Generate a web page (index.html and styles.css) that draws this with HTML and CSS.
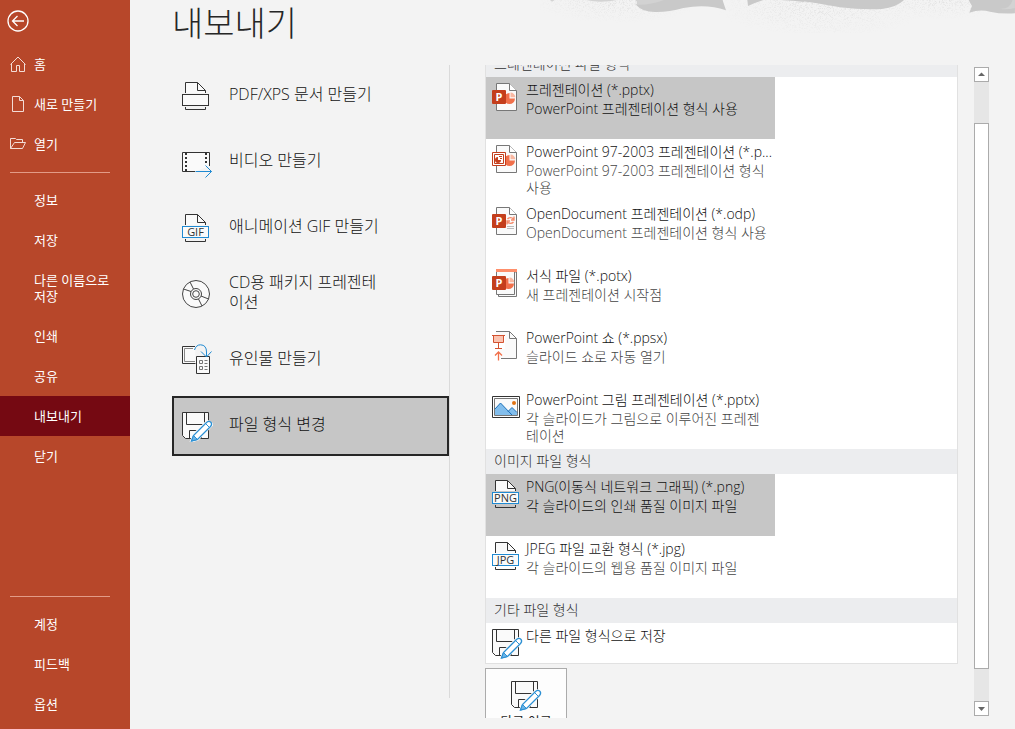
FILE: index.html
```html
<!DOCTYPE html>
<html lang="ko">
<head>
<meta charset="utf-8">
<meta name="viewport" content="width=device-width, initial-scale=1">
<title>내보내기</title>
<link rel="stylesheet" href="styles.css">
</head>
<body>
<svg class="defs" aria-hidden="true">
  <symbol id="save" viewBox="0 0 32 32">
    <path d="M1.500 2.500H27.500V28.500H4.500L1.500 25.500Z" fill="#fafafa" stroke="#333"/>
    <path d="M5.500 2.500V14.500H23.500V2.500M8.500 28.500V20.500H20.500V28.500M12.500 28V25" fill="none" stroke="#333"/>
    <path d="M10.500 31L13 24.500L26.500 11.500L31 14.500L17 29Z" class="halo"/>
    <path d="M10.500 31L12.500 25.500L25.500 12.500Q28 10.500 29.800 12.200Q31.500 14 29.500 16.500L16.500 29.500Z" fill="#fff" stroke="#2b90d4" stroke-width="1.300"/>
    <path d="M10.500 31L12.500 25.500L16.500 29.500Z" fill="#6bb5e8" stroke="#2b90d4"/>
    <path d="M24.500 13.500L28.500 17.500" stroke="#2b90d4"/>
  </symbol>
  <symbol id="tagged" viewBox="0 0 32 32">
    <path d="M4.500 13V2.500H16.500L24.500 10.500V13" fill="#fafafa" stroke="#333"/>
    <path d="M16.500 2.500V10.500H24.500" fill="none" stroke="#333"/>
    <path d="M4.500 27V29.500H24.500V27" fill="none" stroke="#333"/>
    <rect x="1.500" y="14.500" width="26" height="11" fill="#fafafa" stroke="#1f8ad2"/>
  </symbol>
  <symbol id="page" viewBox="0 0 32 32">
    <path d="M5.500 2.500H18.500L25.500 9.500V29.500H5.500Z" fill="#fafafa" stroke="#777"/>
    <path d="M18.500 2.500V9.500H25.500" fill="#fff" stroke="#777"/>
  </symbol>
  <symbol id="pie" viewBox="0 0 32 32">
    <path d="M18.500 12V17.500H24A5.500 5.500 0 1 1 18.500 12Z" fill="#f1704b"/>
    <path d="M19.500 11.500A4.800 4.800 0 0 1 24.300 16.300H19.500Z" fill="#f9b8a2"/>
  </symbol>
  <symbol id="pbadge" viewBox="0 0 32 32">
    <rect x="1" y="9" width="14" height="14" rx="1" fill="#c43e1c"/>
    <text x="8" y="20" class="p-mark">P</text>
  </symbol>
</svg>

<nav class="sidebar">
  <button class="back" aria-label="뒤로"><svg viewBox="0 0 22 22"><circle cx="11" cy="11" r="10"/><path d="M5.500 11H17M10.500 6L5.500 11L10.500 16"/></svg></button>
  <a class="nav" href="#"><svg viewBox="0 0 16 16"><path d="M.500 8.500L8 1L15.500 8.500M1.500 8V15.500H6.500V9.500H9.500V15.500H14.500V8"/></svg><span>홈</span></a>
  <a class="nav" href="#"><svg viewBox="0 0 16 16"><path d="M2.500 .500H9.500L13.500 4.500V15.500H2.500ZM9.500 .500V4.500H13.500"/></svg><span>새로 만들기</span></a>
  <a class="nav" href="#"><svg viewBox="0 0 16 16"><path d="M.500 12.500V2.500H5.500L6.500 3.500H12.500V6M.500 12.500L4.500 6.500H15.500L12.500 12.500Z"/></svg><span>열기</span></a>
  <hr>
  <a class="nav" href="#"><span>정보</span></a>
  <a class="nav" href="#"><span>저장</span></a>
  <a class="nav" href="#"><span>다른 이름으로 저장</span></a>
  <a class="nav" href="#"><span>인쇄</span></a>
  <a class="nav" href="#"><span>공유</span></a>
  <a class="nav current" href="#" aria-current="page"><span>내보내기</span></a>
  <a class="nav" href="#"><span>닫기</span></a>
  <hr class="push">
  <a class="nav" href="#"><span>계정</span></a>
  <a class="nav" href="#"><span>피드백</span></a>
  <a class="nav" href="#"><span>옵션</span></a>
</nav>

<main class="main">
  <svg class="clouds" viewBox="0 0 1425 100" aria-hidden="true">
    <defs>
      <filter id="grain" x="0" y="0" width="100%" height="100%">
        <feTurbulence type="fractalNoise" baseFrequency=".8" numOctaves="2" seed="4"/>
        <feColorMatrix values="0 0 0 0 .72  0 0 0 0 .72  0 0 0 0 .72  4 0 0 0 -1.900"/>
        <feComposite in2="SourceGraphic" operator="in"/>
      </filter>
      <radialGradient id="sand"><stop offset="0" stop-color="#000" stop-opacity=".8"/><stop offset="1" stop-color="#000" stop-opacity="0"/></radialGradient>
    </defs>
    <g filter="url(#grain)">
      <ellipse cx="850" cy="10" rx="330" ry="105" fill="url(#sand)"/>
      <ellipse cx="230" cy="0" rx="260" ry="70" fill="url(#sand)"/>
      <ellipse cx="1220" cy="0" rx="200" ry="60" fill="url(#sand)"/>
    </g>
    <path d="M30 0L36 5L44 0ZM138 0Q180 10 232 0Z" fill="#d4d4d4"/>
    <path d="M286 0Q298 10 288 14Q305 35 345 36Q385 37 430 24Q500 10 558 31Q550 8 548 0Z" fill="#c9c9c9"/>
    <path d="M286 0Q298 10 288 14Q330 16 372 0Z" fill="#d2d2d2"/>
    <path d="M622 0L624 18Q645 8 670 0ZM760 0Q830 8 900 22Q965 30 1025 27Q1070 22 1092 0Z" fill="#c9c9c9"/>
    <path d="M670 0H780L800 6Q730 -2 670 0Z" fill="#c9c9c9"/>
    <path d="M1286 0L1296 18L1288 38Q1320 27 1350 35Q1385 43 1425 40V0Z" fill="#c9c9c9"/>
    <path d="M1380 26Q1410 28 1418 0H1425V24Q1400 30 1380 26Z" fill="#d3d3d3"/>
  </svg>
  <h1>내보내기</h1>
  <div class="content">
    <div class="options">
      <button class="option">
        <svg class="icon" viewBox="0 0 32 32" fill="none" stroke="#333"><path d="M4.500 13V2.500H16.500L24.500 10.500V13" fill="#fafafa"/><path d="M16.500 2.500V10.500H24.500M4.500 27V29.500H24.500V27"/><rect x="1.500" y="14.500" width="26" height="11" fill="#fafafa"/></svg>
        <span>PDF/XPS 문서 만들기</span></button>
      <button class="option">
        <svg class="icon" viewBox="0 0 32 32" fill="none" stroke="#333"><path d="M14 25.500H1.500V6.500H28.500V20" fill="#fafafa"/><path d="M5 7V25M25 7V19" stroke-width="2" stroke-dasharray="2 2"/><path d="M14.500 25.500H30.500M24.500 19.500L30.500 25.500L24.500 31.500" stroke="#1f8ad2"/></svg>
        <span>비디오 만들기</span></button>
      <button class="option">
        <svg class="icon" viewBox="0 0 32 32"><use href="#tagged"/><text x="14.500" y="24" class="tag">GIF</text></svg>
        <span>애니메이션 GIF 만들기</span></button>
      <button class="option">
        <svg class="icon" viewBox="0 0 32 32" fill="none" stroke="#444"><circle cx="15" cy="16" r="13.500" fill="#fafafa"/><circle cx="15" cy="16" r="5.500"/><circle cx="15" cy="16" r="3.300"/><path d="M2.500 11L10 13.500M9 4L12.500 11M20 18L27.500 21M17.500 21L21 28"/></svg>
        <span>CD용 패키지 프레젠테이션</span></button>
      <button class="option">
        <svg class="icon" viewBox="0 0 32 32" fill="none" stroke="#333"><path d="M14.500 19.500H1.500V2.500H14" fill="#fafafa"/><path d="M14 17.500H3.500V4.500H12" stroke="#888"/><path d="M15.500 12.500H28.500V29.500H15.500Z" fill="#fafafa"/><path d="M18.500 16.500H21.500V19.500H18.500ZM18.500 22.500H21.500V25.500H18.500ZM23.500 16.500H26.500M23.500 19.500H26.500M23.500 22.500H26.500M23.500 25.500H26.500" stroke="#777"/><path d="M13.500 6Q15 .800 19.500 .800Q25.500 1 25.500 8V12.500M20 7.500L25.500 13L30.500 7.500" stroke="#1f8ad2"/></svg>
        <span>유인물 만들기</span></button>
      <button class="option selected">
        <svg class="icon" viewBox="0 0 32 32"><use href="#save"/></svg>
        <span>파일 형식 변경</span></button>
    </div>

    <div class="viewport">
      <div class="types">
        <h2>프레젠테이션 파일 형식</h2>
        <button class="type selected"><svg class="icon" viewBox="0 0 32 32"><use href="#page"/><use href="#pie"/><use href="#pbadge"/></svg>
          <span class="text"><b>프레젠테이션 (*.pptx)</b><span>PowerPoint 프레젠테이션 형식 사용</span></span></button>
        <button class="type"><svg class="icon" viewBox="0 0 32 32"><use href="#page"/><use href="#pie"/><path d="M1.500 9.500H14.500V22.500H1.500Z" fill="#fff" stroke="#c43e1c"/><path d="M3.500 11.500H12.500V20.500H3.500Z" fill="#fff" stroke="#c43e1c"/><path d="M7 14V17H10A3 3 0 1 1 7 14ZM8 13H11V14H8ZM9 15H11V16H9Z" fill="#c43e1c"/></svg>
          <span class="text"><b>PowerPoint 97-2003 프레젠테이션 (*.p...</b><span>PowerPoint 97-2003 프레젠테이션 형식 사용</span></span></button>
        <button class="type"><svg class="icon" viewBox="0 0 32 32"><use href="#page"/><path d="M16.500 14A4 4 0 0 1 22.500 14M22.500 17A4 4 0 0 1 16.500 17M23 11.500V15H20M16 19.500V16H19" fill="none" stroke="#f58b6b" stroke-width="1.400"/><path d="M16 21.500H23M16 23.500H23" stroke="#bbb"/><use href="#pbadge"/></svg>
          <span class="text"><b>OpenDocument 프레젠테이션 (*.odp)</b><span>OpenDocument 프레젠테이션 형식 사용</span></span></button>
        <button class="type"><svg class="icon" viewBox="0 0 32 32"><path d="M7.500 5V29.500H25.500V5Z" fill="#fafafa" stroke="#777"/><path d="M5.500 4V27.500H23.500V4Z" fill="#fafafa" stroke="#777"/><path d="M5 2H26V5H5Z" fill="#ff8f6b"/><g transform="translate(-1 -1)"><use href="#pie" width="32" height="32"/></g><use href="#pbadge"/></svg>
          <span class="text"><b>서식 파일 (*.potx)</b><span>새 프레젠테이션 시작점</span></span></button>
        <button class="type"><svg class="icon" viewBox="0 0 32 32"><path d="M5 2.500H18.500L25.500 9.500V29.500H9V20H14V6H5Z" fill="#fafafa"/><path d="M5 2.500H18.500L25.500 9.500V29.500H10M18.500 2.500V9.500H25.500" fill="none" stroke="#777"/><path d="M2.500 6.500H12.500V13.500H2.500Z" fill="#fbc4b2" stroke="#d35230"/><path d="M1 6.500H14M7.500 14V19.500M4 19.500H11" stroke="#d35230"/><path d="M7.500 31.500V23M4 26.500L7.500 23L11 26.500" fill="none" stroke="#f1704b" stroke-width="1.300"/></svg>
          <span class="text"><b>PowerPoint 쇼 (*.ppsx)</b><span>슬라이드 쇼로 자동 열기</span></span></button>
        <button class="type"><svg class="icon" viewBox="0 0 32 32"><path d="M1.500 5.500H28.500V26.500H1.500Z" fill="#fff" stroke="#333"/><path d="M3.500 7.500H26.500V24.500H3.500Z" fill="#fafafa" stroke="#777"/><path d="M4 18L9.500 12L21 24H4Z" fill="#83beec"/><path d="M17 20.500L21 16.500L26 21.500V24H20.500Z" fill="#83beec"/><path d="M4 18L9.500 12L21 24M17 20.500L21 16.500L26 21.500" fill="none" stroke="#1b6fb8"/><circle cx="23" cy="12" r="2" fill="#e07214"/></svg>
          <span class="text"><b>PowerPoint 그림 프레젠테이션 (*.pptx)</b><span>각 슬라이드가 그림으로 이루어진 프레젠테이션</span></span></button>
        <h2>이미지 파일 형식</h2>
        <button class="type selected"><svg class="icon" viewBox="0 0 32 32"><use href="#tagged"/><text x="14.500" y="24" class="tag">PNG</text></svg>
          <span class="text"><b>PNG(이동식 네트워크 그래픽) (*.png)</b><span>각 슬라이드의 인쇄 품질 이미지 파일</span></span></button>
        <button class="type"><svg class="icon" viewBox="0 0 32 32"><use href="#tagged"/><text x="14.500" y="24" class="tag">JPG</text></svg>
          <span class="text"><b>JPEG 파일 교환 형식 (*.jpg)</b><span>각 슬라이드의 웹용 품질 이미지 파일</span></span></button>
        <h2>기타 파일 형식</h2>
        <button class="type short"><svg class="icon" viewBox="0 0 32 32"><use href="#save"/></svg>
          <span class="text"><b>다른 파일 형식으로 저장</b></span></button>
      </div>
      <button class="save-as"><svg class="icon" viewBox="0 0 32 32"><use href="#save"/></svg><span>다른 이름으로 저장</span></button>
    </div>

    <div class="scrollbar">
      <button aria-label="위로"><svg viewBox="0 0 13 13"><path d="M3 8L6.500 4.500L10 8Z"/></svg></button>
      <div class="track"><div class="thumb"></div></div>
      <button aria-label="아래로"><svg viewBox="0 0 13 13"><path d="M3 5H10L6.500 9Z"/></svg></button>
    </div>
  </div>
</main>
</body>
</html>
```
FILE: styles.css
```css
* { box-sizing: border-box; }

body {
  margin: 0;
  display: flex;
  height: 100vh;
  min-height: 640px;
  background: #f3f3f3;
  color: #262626;
  font-family: "Open Sans", "Noto Sans CJK KR", sans-serif;
  font-size: 14px;
}

button {
  margin: 0;
  padding: 0;
  border: 0;
  background: none;
  color: inherit;
  font: inherit;
  text-align: left;
}

h1, h2 { margin: 0; font-weight: 400; }

.defs { position: absolute; width: 0; height: 0; }
.icon { flex: none; width: 32px; height: 32px; overflow: visible; }
.halo { fill: none; stroke: #fafafa; stroke-width: 3px; }
.selected .halo { stroke: #c6c6c6; }
.tag { fill: #333; font-size: 11px; font-weight: 400; text-anchor: middle; stroke: none; }
.p-mark { fill: #fff; font-size: 11px; font-weight: 700; text-anchor: middle; }

/* Sidebar */
.sidebar {
  flex: none;
  display: flex;
  flex-direction: column;
  width: 130px;
  padding: 10px 0 5px;
  background: #b7472a;
  color: #fff;
  font-size: 13px;
  line-height: 16px;
}

.sidebar svg { fill: none; stroke: #f3dcd6; }
.back { margin: 0 0 12px 7px; width: 22px; height: 22px; }
.back svg { display: block; width: 22px; height: 22px; }
.sidebar .back svg { stroke: #fff; stroke-width: 1.3px; }

.nav {
  display: flex;
  gap: 8px;
  padding: 12px 16px 12px 10px;
  color: #fff;
  text-decoration: none;
}
.nav svg { flex: none; width: 16px; height: 16px; }
.nav span:first-child { margin-left: 24px; }
.nav.current { background: #750912; }

.sidebar hr {
  width: 100px;
  height: 1px;
  margin: 8px 10px 7px;
  border: 0;
  background: #e29b87;
}
.sidebar hr.push { margin-top: auto; }

/* Main area */
.main {
  position: relative;
  flex: 1;
  min-width: 0;
  display: flex;
  flex-direction: column;
  padding: 0 26px 11px 42px;
}

.clouds { position: absolute; top: 0; right: 0; width: 475px; }

h1 {
  height: 65px;
  font-size: 34px;
  font-weight: 300;
  line-height: 46px;
}

.content { flex: 1; min-height: 0; display: flex; }

.options {
  flex: none;
  display: flex;
  flex-direction: column;
  gap: 6px;
  width: 278px;
  margin-bottom: 20px;
  padding-top: 1px;
  border-right: 1px solid #dadada;
}

.option {
  display: flex;
  align-items: center;
  gap: 16px;
  height: 60px;
  padding: 0 60px 0 7px;
  border: 2px solid transparent;
  color: #111;
  font-size: 16px;
  font-weight: 300;
  line-height: 20px;
}
.option span { margin-top: -4px; }
.option.selected { border-color: #262626; background: #c6c6c6; }

.viewport {
  flex: 1;
  min-width: 0;
  margin-left: 35px;
  overflow: hidden;
}

.types {
  margin-top: -14px;
  border: 1px solid #e1e1e1;
  background: #fff;
}

h2 {
  height: 25px;
  padding-left: 8px;
  background: #ecedef;
  color: #333;
  font-size: 14px;
  font-weight: 300;
  line-height: 23px;
}

.type {
  display: flex;
  gap: 3px;
  width: 289px;
  height: 62px;
  padding: 4px 5px;
  color: #444;
  font-weight: 300;
}
.type.short { height: 40px; }
.type.selected { background: #c6c6c6; color: #111; }
.text { flex: 1; min-width: 0; line-height: 17px; }
.text > * { display: block; }
.text b {
  padding-bottom: 1px;
  color: #111;
  font-weight: 300;
  line-height: 18px;
  white-space: nowrap;
}

.save-as {
  display: flex;
  flex-direction: column;
  align-items: center;
  gap: 2px;
  width: 82px;
  height: 82px;
  margin-top: 4px;
  padding: 10px 11px;
  border: 1px solid #ababab;
  background: #fdfdfd;
  font-size: 13px;
  line-height: 16px;
  text-align: center;
}

.scrollbar {
  flex: none;
  display: flex;
  flex-direction: column;
  width: 15px;
  margin: 2px 0 2px 16px;
}
.scrollbar button {
  flex: none;
  height: 15px;
  border: 1px solid #ababab;
  background: #fff;
}
.scrollbar svg { display: block; width: 13px; height: 13px; fill: #666; }
.track { flex: 1; padding: 41px 0 32px; background: #e6e6e6; }
.thumb { height: 100%; border: 1px solid #ababab; background: #fff; }
```
